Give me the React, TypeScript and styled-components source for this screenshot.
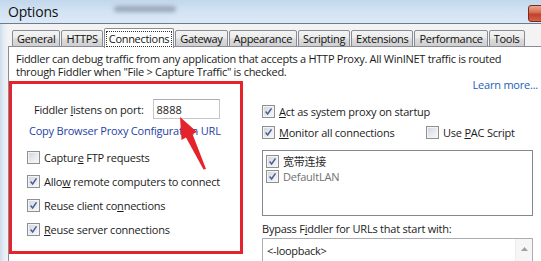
import React from "react";
import styled, { createGlobalStyle } from "styled-components";

const GlobalStyle = createGlobalStyle`
  html, body {
    margin: 0;
    padding: 0;
    overflow: hidden;
    background: #ffffff;
  }
  body {
    font-family: "Open Sans", "Noto Sans CJK SC", sans-serif;
    font-size: 11px;
    color: #1b1b1b;
  }
`;

const Frame = styled.div`
  position: relative;
  width: 541px;
  height: 261px;
  overflow: hidden;
  display: flex;
  flex-direction: column;
  background: linear-gradient(90deg, #cfdceb 0px, #e6edf5 4px, #f3f3f3 8px);
`;

const TitleBar = styled.div`
  height: 23px;
  flex: none;
  display: flex;
  align-items: center;
  padding-left: 8px;
  background: linear-gradient(180deg, #c2d7ec 0%, #d3e3f4 50%, #dbe8f6 100%);
  border-bottom: 1px solid #6c7c8e;
`;

const Caption = styled.span`
  font-size: 14px;
  color: #111;
  letter-spacing: -0.2px;
`;

const BehindWindow = styled.div`
  width: 62px;
  height: 6px;
  margin-left: 56px;
  margin-top: -6px;
  border-radius: 3px;
  background: #8c99a8;
  filter: blur(2px);
  opacity: 0.8;
`;

const CloseButton = styled.div`
  margin-left: auto;
  margin-right: -32px;
  margin-top: 4px;
  width: 43px;
  height: 15px;
  border: 1px solid #7a2b1e;
  border-radius: 3px;
  background: linear-gradient(180deg, #e9a692 0%, #d6694e 45%, #c4402a 55%, #d0644a 100%);
`;

const Client = styled.div`
  flex: 1;
  display: flex;
  flex-direction: column;
  padding: 3px 0 0 8px;
`;

const TabStrip = styled.div`
  display: flex;
  align-items: flex-end;
  height: 20px;
  padding-left: 4px;
  position: relative;
  z-index: 1;
`;

const Tab = styled.div<{ $active?: boolean }>`
  height: ${(p) => (p.$active ? "20px" : "17px")};
  margin-bottom: ${(p) => (p.$active ? "-1px" : "0")};
  margin-right: 1px;
  padding: 0 ${(p) => (p.$active ? "2px" : "4px")};
  display: flex;
  align-items: center;
  font-size: 11px;
  letter-spacing: -0.3px;
  color: #111;
  border: 1px solid #898c95;
  border-bottom: ${(p) => (p.$active ? "none" : "1px solid #898c95")};
  border-radius: 2px 2px 0 0;
  background: ${(p) =>
    p.$active
      ? "#ffffff"
      : "linear-gradient(180deg, #f3f3f3 0%, #ebebeb 48%, #dddddd 52%, #cfcfcf 100%)"};
  box-sizing: border-box;
`;

const FocusText = styled.span`
  padding: 0 2px;
  outline: 1px dotted #333;
  line-height: 14px;
`;

const Panel = styled.div`
  flex: 1;
  background: #ffffff;
  border-top: 1px solid #898c95;
  border-left: 1px solid #898c95;
  margin-top: -1px;
  display: flex;
  flex-direction: column;
`;

const Intro = styled.div`
  padding: 5px 7px 0;
  line-height: 13px;
  white-space: nowrap;
  letter-spacing: -0.28px;
`;

const Columns = styled.div`
  display: flex;
  align-items: flex-start;
  gap: 19px;
`;

const HighlightBox = styled.div`
  width: 234px;
  height: 173px;
  box-sizing: border-box;
  margin-top: 3px;
  border: 3px solid #e5232b;
  padding: 15px 0 0 0;
  display: flex;
  flex-direction: column;
  flex: none;
`;

const PortRow = styled.div`
  display: flex;
  align-items: center;
  gap: 9px;
  padding-left: 22px;
`;

const Label = styled.span`
  letter-spacing: -0.22px;
  white-space: nowrap;
`;

const PortInput = styled.div`
  width: 67px;
  height: 20px;
  box-sizing: border-box;
  border: 1px solid #c4c7cc;
  border-top-color: #abadb3;
  padding-left: 3px;
  display: flex;
  align-items: center;
  font-size: 11px;
`;

const Link = styled.span<{ $color?: string }>`
  color: ${(p) => p.$color || "#1f3fa6"};
  letter-spacing: -0.22px;
  white-space: nowrap;
  line-height: 14px;
`;

const CopyLink = styled(Link)`
  margin-top: 5px;
  padding-left: 17px;
`;

const CheckList = styled.div`
  display: flex;
  flex-direction: column;
  gap: 10px;
  padding-left: 15px;
  margin-top: 12px;
`;

const CheckRow = styled.div<{ $color?: string }>`
  display: flex;
  align-items: center;
  gap: 4px;
  height: 14px;
  white-space: nowrap;
  letter-spacing: -0.22px;
  color: ${(p) => p.$color || "#1b1b1b"};
`;

const Box = styled.span`
  width: 13px;
  height: 13px;
  box-sizing: border-box;
  border: 1px solid #8e8f8f;
  flex: none;
  display: flex;
  align-items: center;
  justify-content: center;
  background: linear-gradient(135deg, #cfd3da 0%, #e6e9ee 50%, #f8f9fa 100%);
  box-shadow: inset 0 0 0 1px #f4f4f4;
`;

const RightColumn = styled.div`
  flex: 1;
  display: flex;
  flex-direction: column;
  padding-right: 3px;
`;

const LearnRow = styled.div`
  display: flex;
  justify-content: flex-end;
  line-height: 13px;
`;

const RightChecks = styled.div`
  display: flex;
  flex-direction: column;
  gap: 7px;
  margin-top: 12px;
`;

const SplitRow = styled.div`
  display: flex;
  align-items: center;
`;

const PacSpacer = styled.div`
  width: 164px;
  flex: none;
`;

const ListBox = styled.div`
  width: 271px;
  height: 66px;
  box-sizing: border-box;
  margin-top: 11px;
  border: 1px solid #828790;
  padding: 3px 0 0 3px;
  display: flex;
  flex-direction: column;
  gap: 1px;
`;

const BypassLabel = styled(Label)`
  margin-top: 6px;
  line-height: 14px;
`;

const BypassArea = styled.div`
  width: 271px;
  height: 40px;
  box-sizing: border-box;
  margin-top: 2px;
  border: 1px solid #abadb3;
  display: flex;
  justify-content: space-between;
`;

const AreaText = styled.span`
  padding: 4px 0 0 4px;
  letter-spacing: -0.3px;
`;

const ScrollTrack = styled.div`
  width: 17px;
  background: #f6f6f6;
  border-left: 1px solid #eeeeee;
  display: flex;
  justify-content: center;
  padding-top: 8px;
  box-sizing: border-box;
`;

const ArrowLayer = styled.svg`
  position: absolute;
  left: 0;
  top: 0;
  pointer-events: none;
`;

const Check = ({ on }: { on?: boolean }) => (
  <Box>
    {on && (
      <svg width="9" height="9" viewBox="0 0 9 9">
        <path d="M1.6 4.6 L3.6 7 L7.5 1.3" fill="none" stroke="#4a5d98" strokeWidth="1.5" />
      </svg>
    )}
  </Box>
);

export default function App() {
  return (
    <>
      <GlobalStyle />
      <Frame>
        <TitleBar>
          <Caption>Options</Caption>
          <BehindWindow />
          <CloseButton />
        </TitleBar>
        <Client>
          <TabStrip>
            <Tab>General</Tab>
            <Tab>HTTPS</Tab>
            <Tab $active>
              <FocusText>Connections</FocusText>
            </Tab>
            <Tab>Gateway</Tab>
            <Tab>Appearance</Tab>
            <Tab>Scripting</Tab>
            <Tab>Extensions</Tab>
            <Tab>Performance</Tab>
            <Tab>Tools</Tab>
          </TabStrip>
          <Panel>
            <Intro>
              Fiddler can debug traffic from any application that accepts a HTTP Proxy. All WinINET traffic is routed
              <br />
              through Fiddler when "File &gt; Capture Traffic" is checked.
            </Intro>
            <Columns>
              <HighlightBox>
                <PortRow>
                  <Label>
                    Fiddler <u>l</u>istens on port:
                  </Label>
                  <PortInput>8888</PortInput>
                </PortRow>
                <CopyLink>Copy Browser Proxy Configuration URL</CopyLink>
                <CheckList>
                  <CheckRow>
                    <Check />
                    <span>
                      Captur<u>e</u> FTP requests
                    </span>
                  </CheckRow>
                  <CheckRow>
                    <Check on />
                    <span>
                      Allo<u>w</u> remote computers to connect
                    </span>
                  </CheckRow>
                  <CheckRow>
                    <Check on />
                    <span>
                      Reuse client co<u>n</u>nections
                    </span>
                  </CheckRow>
                  <CheckRow>
                    <Check on />
                    <span>
                      <u>R</u>euse server connections
                    </span>
                  </CheckRow>
                </CheckList>
              </HighlightBox>
              <RightColumn>
                <LearnRow>
                  <Link $color="#2360b8">Learn more...</Link>
                </LearnRow>
                <RightChecks>
                  <CheckRow>
                    <Check on />
                    <span>
                      <u>A</u>ct as system proxy on startup
                    </span>
                  </CheckRow>
                  <SplitRow>
                    <PacSpacer>
                      <CheckRow>
                        <Check on />
                        <span>
                          <u>M</u>onitor all connections
                        </span>
                      </CheckRow>
                    </PacSpacer>
                    <CheckRow>
                      <Check />
                      <span>
                        Use <u>P</u>AC Script
                      </span>
                    </CheckRow>
                  </SplitRow>
                </RightChecks>
                <ListBox>
                  <CheckRow $color="#2b2b2b">
                    <Check on />
                    <span>宽带连接</span>
                  </CheckRow>
                  <CheckRow $color="#707070">
                    <Check on />
                    <span>DefaultLAN</span>
                  </CheckRow>
                </ListBox>
                <BypassLabel>
                  Bypass F<u>i</u>ddler for URLs that start with:
                </BypassLabel>
                <BypassArea>
                  <AreaText>&lt;-loopback&gt;</AreaText>
                  <ScrollTrack>
                    <svg width="7" height="4" viewBox="0 0 7 4">
                      <path d="M0 4 L3.5 0 L7 4 Z" fill="#a0a0a0" />
                    </svg>
                  </ScrollTrack>
                </BypassArea>
              </RightColumn>
            </Columns>
          </Panel>
        </Client>
        <ArrowLayer width="541" height="261" viewBox="0 0 541 261">
          <path
            d="M180 117 L197 132 L192.5 134 L206 169 L203.5 169.5 L186 137.5 L181.5 140 Z"
            fill="#e5232b"
          />
        </ArrowLayer>
      </Frame>
    </>
  );
}
